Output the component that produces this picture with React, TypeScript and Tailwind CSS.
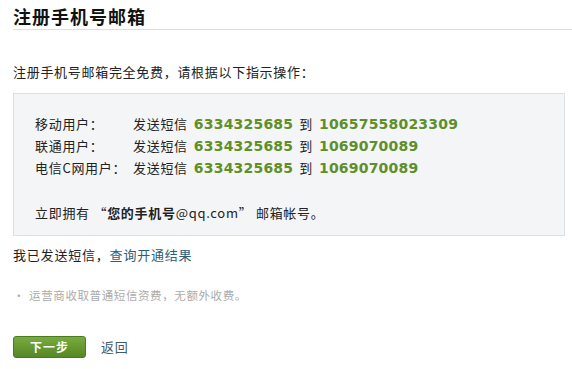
import React from 'react';

const rows = [
  { label: '移动用户：', to: '10657558023309' },
  { label: '联通用户：', to: '1069070089' },
  { label: '电信C网用户：', to: '1069070089' },
];

const cjk = "font-['Noto_Sans_CJK_SC','Noto_Sans',sans-serif]";
const num = "font-['DejaVu_Sans',Verdana,sans-serif] font-bold text-[14px] text-[#5e8f28] tracking-[0.2px]";

export default function App() {
  return (
    <div className={`w-[572px] h-[369px] bg-white text-[#222] ${cjk} overflow-hidden`}>
      {/* page title */}
      <div className="ml-[13px] pt-[6px] pb-[3px] border-b border-[#dedede]">
        <h1 className="text-[18px] leading-[20px] font-bold tracking-[1px] text-[#111]">注册手机号邮箱</h1>
      </div>

      <div className="pl-[13px] pr-[7px]">
        <p className="mt-[32px] text-[13px] leading-[20px] tracking-[0.7px]">
          注册手机号邮箱完全免费，请根据以下指示操作：
        </p>

        {/* instructions box */}
        <div className="mt-[11px] h-[143px] border border-[#dcdfe3] bg-[#f4f5f7] pl-[21px] pt-[19px] text-[13px] tracking-[0.7px]">
          {rows.map((r) => (
            <div key={r.label} className="flex items-center h-[22px]">
              <span className="w-[98px] shrink-0">{r.label}</span>
              <span>发送短信</span>
              <span className={`ml-[6px] ${num}`}>6334325685</span>
              <span className="mx-[6px]">到</span>
              <span className={num}>{r.to}</span>
            </div>
          ))}
          <div className="mt-[23px] h-[22px] flex items-center">
            <span>立即拥有 “</span>
            <span className="font-bold">您的手机号</span>
            <span>@qq.com” 邮箱帐号。</span>
          </div>
        </div>

        <p className="mt-[9px] text-[13px] leading-[20px] tracking-[0.8px]">
          我已发送短信，<a href="#" className="text-[#2d5d78]">查询开通结果</a>
        </p>

        <p className="mt-[22px] text-[11.5px] leading-[16px] tracking-[0.6px] text-[#ababab]">
          <span className="mr-[4px]">•</span>运营商收取普通短信资费，无额外收费。
        </p>

        <div className="mt-[33px] flex items-center">
          <button className="w-[73px] h-[22px] rounded-[3px] border border-[#4b7a1f] bg-gradient-to-b from-[#78ab3e] to-[#558725] text-white text-[12px] font-bold tracking-[1px] leading-none">
            下一步
          </button>
          <a href="#" className="ml-[15px] text-[13px] text-[#3d5a6e] tracking-[0.8px]">返回</a>
        </div>
      </div>
    </div>
  );
}
